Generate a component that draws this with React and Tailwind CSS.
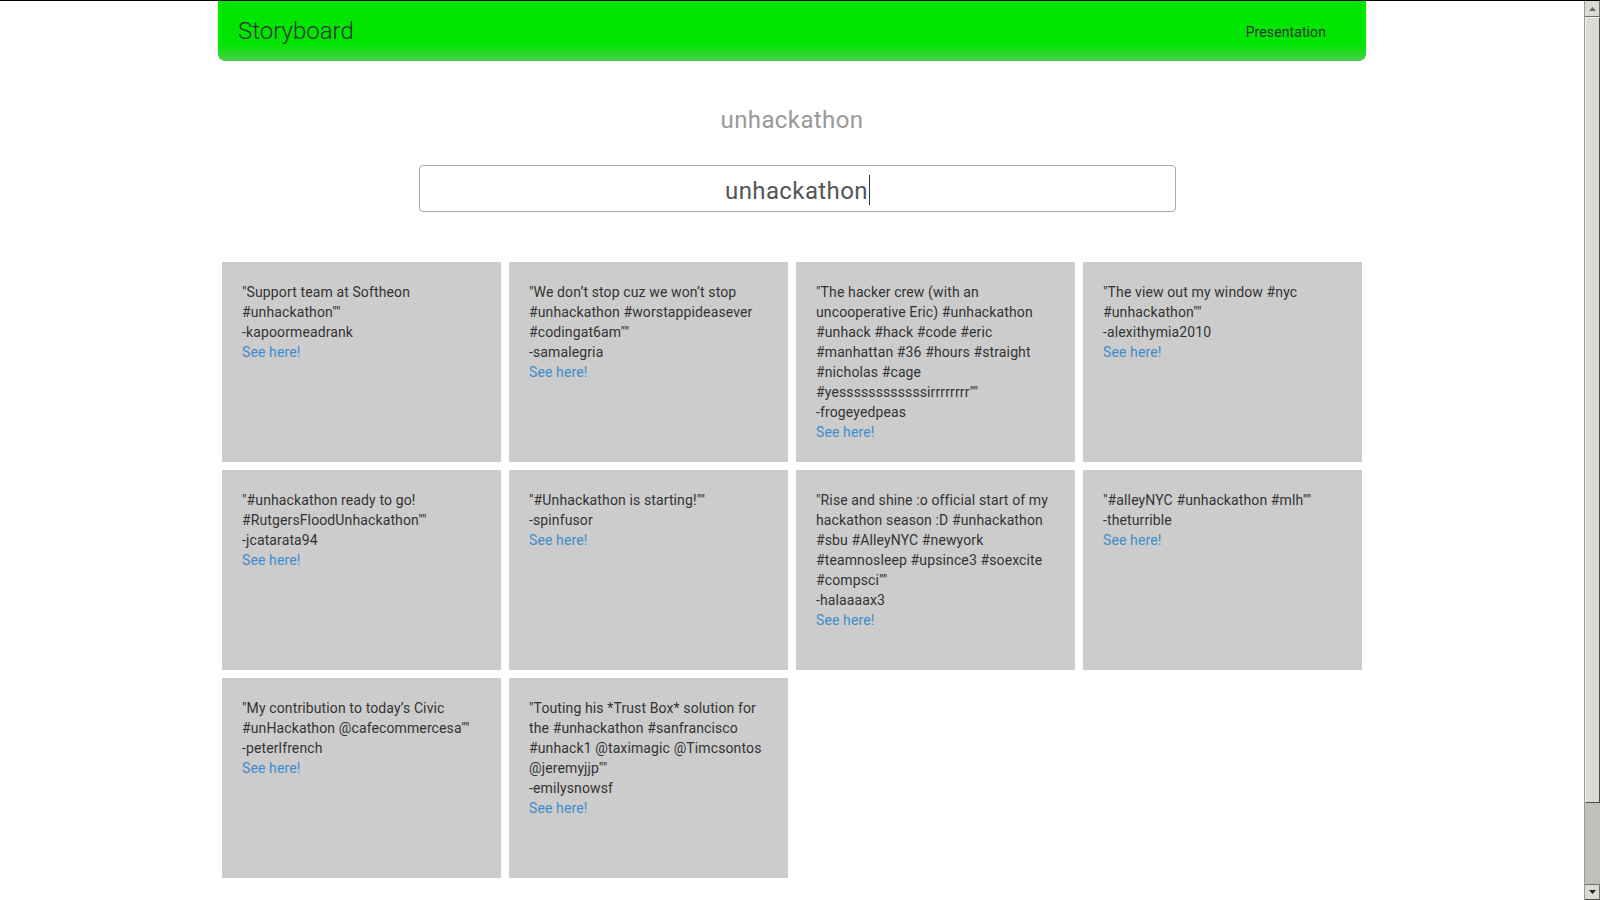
import React from "react";

const cards = [
  { lines: ['"Support team at Softheon', '#unhackathon""'], author: "-kapoormeadrank" },
  { lines: ['"We don\u2019t stop cuz we won\u2019t stop', "#unhackathon #worstappideasever", '#codingat6am""'], author: "-samalegria" },
  {
    lines: [
      '"The hacker crew (with an',
      "uncooperative Eric) #unhackathon",
      "#unhack #hack #code #eric",
      "#manhattan #36 #hours #straight",
      "#nicholas #cage",
      '#yessssssssssssirrrrrrrr""',
    ],
    author: "-frogeyedpeas",
  },
  { lines: ['"The view out my window #nyc', '#unhackathon""'], author: "-alexithymia2010" },
  { lines: ['"#unhackathon ready to go!', '#RutgersFloodUnhackathon""'], author: "-jcatarata94" },
  { lines: ['"#Unhackathon is starting!""'], author: "-spinfusor" },
  {
    lines: [
      '"Rise and shine :o official start of my',
      "hackathon season :D #unhackathon",
      "#sbu #AlleyNYC #newyork",
      "#teamnosleep #upsince3 #soexcite",
      '#compsci""',
    ],
    author: "-halaaaax3",
  },
  { lines: ['"#alleyNYC #unhackathon #mlh""'], author: "-theturrible" },
  { lines: ['"My contribution to today\u2019s Civic', '#unHackathon @cafecommercesa""'], author: "-peterlfrench" },
  {
    lines: [
      '"Touting his *Trust Box* solution for',
      "the #unhackathon #sanfrancisco",
      "#unhack1 @taximagic @Timcsontos",
      '@jeremyjjp""',
    ],
    author: "-emilysnowsf",
  },
];

function Card({ lines, author }) {
  return (
    <div className="h-[200px] bg-[#cccccc] p-[20px] text-[14px] leading-[20px] tracking-[0.12px] text-[#333333]">
      {lines.map((l, i) => (
        <div key={i} className="whitespace-nowrap">{l}</div>
      ))}
      <div className="whitespace-nowrap">{author}</div>
      <div className="whitespace-nowrap">
        <a className="text-[#428bca] cursor-pointer">See here!</a>
      </div>
    </div>
  );
}

function Scrollbar() {
  return (
    <div className="w-[16px] h-full flex flex-col bg-[#c0bfba] border-l border-[#9a9994]">
      <div className="h-[16px] bg-[#dcdad5] border-b border-r border-[#6f6e6a] flex items-center justify-center">
        <svg width="7" height="4" viewBox="0 0 7 4"><polygon points="0,4 7,4 3.5,0" fill="#6a6a6a" /></svg>
      </div>
      <div className="h-[786px] bg-[#dcdad5] border-t border-l border-[#f4f3f1] border-r-[#4a4a48] border-b-[#4a4a48] border-r border-b" />
      <div className="flex-1" />
      <div className="h-[16px] bg-[#dcdad5] border-t border-r border-[#6f6e6a] border-b border-b-[#4a4a48] flex items-center justify-center">
        <svg width="7" height="4" viewBox="0 0 7 4"><polygon points="0,0 7,0 3.5,4" fill="#222" /></svg>
      </div>
    </div>
  );
}

export default function App() {
  return (
    <div
      className="w-[1600px] h-[900px] overflow-hidden flex flex-col bg-white"
      style={{ fontFamily: "Roboto, 'Noto Sans', sans-serif" }}
    >
      <div className="h-[1px] bg-black shrink-0" />
      <div className="flex flex-1 min-h-0">
        <div className="flex-1 flex flex-col">
          <div className="mx-auto w-[1148px] h-[60px] rounded-b-[7px] bg-[linear-gradient(to_bottom,#00e600_0%,#00e600_72%,#4ccf4c_100%)] flex items-center justify-between pl-[20px] pr-[40px]">
            <span className="text-[24px] font-light text-[#333333] leading-none">Storyboard</span>
            <span className="text-[14px] text-[#333333] leading-none mt-[2px] tracking-[0.1px]">Presentation</span>
          </div>
          <div className="mt-[39px] h-[40px] flex items-center justify-center text-[24px] tracking-[0.4px] text-[#999999]">
            unhackathon
          </div>
          <div className="ml-[419px] mt-[25px] w-[757px] h-[47px] rounded-[4px] border border-[#a9a9a9] flex items-center justify-center pt-[4px] text-[24px] tracking-[0.4px] text-[#555555]">
            <span>unhackathon</span>
            <span className="w-[1px] h-[30px] bg-[#333] ml-[1px] -mt-[2px]" />
          </div>
          <div className="mx-auto mt-[50px] w-[1140px] grid grid-cols-4 gap-[8px]">
            {cards.map((c, i) => (
              <Card key={i} {...c} />
            ))}
          </div>
        </div>
        <Scrollbar />
      </div>
    </div>
  );
}
